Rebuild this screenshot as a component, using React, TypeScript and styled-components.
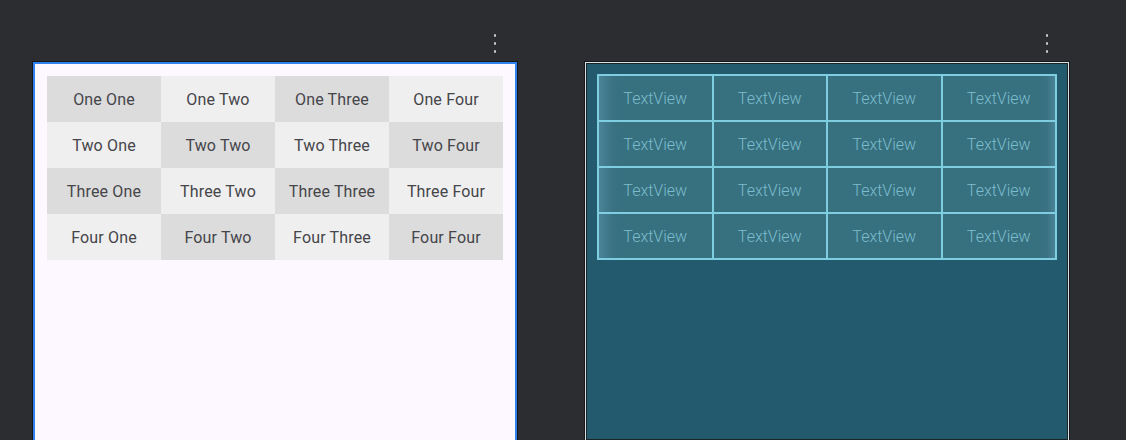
import * as React from "react"
import styled, { createGlobalStyle } from "styled-components"

const GlobalStyle = createGlobalStyle`
  html, body {
    margin: 0;
    padding: 0;
    background: #2b2d31;
    font-family: Roboto, "Liberation Sans", sans-serif;
    overflow: hidden;
  }
`

const Page = styled.div`
  display: flex;
  gap: 68px;
  padding-left: 33px;
  width: 1126px;
  height: 440px;
  box-sizing: border-box;
  overflow: hidden;
`

const Column = styled.div`
  display: flex;
  flex-direction: column;
  width: 484px;
`

const MenuBar = styled.div`
  display: flex;
  justify-content: flex-end;
  height: 62px;
  padding-right: 21px;
  box-sizing: border-box;
`

const Dots = styled.div`
  display: flex;
  flex-direction: column;
  gap: 5.5px;
  padding-top: 34px;

  span {
    width: 2.5px;
    height: 2.5px;
    border-radius: 50%;
    background: #c8c9cc;
  }
`

const DesignPanel = styled.div`
  flex: 1;
  background: #fdf7ff;
  border: 2px solid #2f82f0;
  border-bottom: none;
  box-shadow: 0 0 0 1px #16171a;
  padding: 12px;
  box-sizing: border-box;
`

const BlueprintPanel = styled.div`
  flex: 1;
  background: #235a6d;
  border: 1px solid #d6e2e6;
  border-bottom: none;
  box-shadow: 0 0 0 1px #16171a, inset 0 0 0 1px #1c2326;
  padding: 11px;
  box-sizing: border-box;
`

const Table = styled.div`
  display: grid;
  grid-template-columns: repeat(4, 1fr);
  grid-auto-rows: 46px;
`

const Cell = styled.div<{ $dark: boolean }>`
  display: flex;
  align-items: center;
  justify-content: center;
  background: ${(p) => (p.$dark ? "#dcdcdc" : "#efefef")};
  color: #45454a;
  font-size: 16px;
  letter-spacing: 0.15px;
`

const BlueTable = styled.div`
  display: grid;
  grid-template-columns: repeat(4, 1fr);
  grid-auto-rows: 46px;
  border: 1px solid #7fcde0;
`

const BlueCell = styled.div<{ $edge?: "left" | "right" }>`
  display: flex;
  align-items: center;
  justify-content: center;
  border: 1px solid #7fcde0;
  color: #7cbdce;
  font-size: 16px;
  font-weight: 300;
  background: ${(p) =>
    p.$edge === "left"
      ? "linear-gradient(to right, #4a8496 0px, #3a7284 14px, #37707f 22px)"
      : p.$edge === "right"
      ? "linear-gradient(to left, #4a8496 0px, #3a7284 8px, #37707f 16px)"
      : "#37707f"};
`

const names = ["One", "Two", "Three", "Four"]

const Menu = () => (
  <MenuBar>
    <Dots>
      <span />
      <span />
      <span />
    </Dots>
  </MenuBar>
)

export default function App() {
  return (
    <>
      <GlobalStyle />
      <Page>
        <Column>
          <Menu />
          <DesignPanel>
            <Table>
              {names.map((r, ri) =>
                names.map((c, ci) => (
                  <Cell key={r + c} $dark={(ri + ci) % 2 === 0}>
                    {r} {c}
                  </Cell>
                ))
              )}
            </Table>
          </DesignPanel>
        </Column>
        <Column>
          <Menu />
          <BlueprintPanel>
            <BlueTable>
              {names.map((r) =>
                names.map((c, ci) => (
                  <BlueCell
                    key={r + c}
                    $edge={ci === 0 ? "left" : ci === 3 ? "right" : undefined}
                  >
                    TextView
                  </BlueCell>
                ))
              )}
            </BlueTable>
          </BlueprintPanel>
        </Column>
      </Page>
    </>
  )
}
